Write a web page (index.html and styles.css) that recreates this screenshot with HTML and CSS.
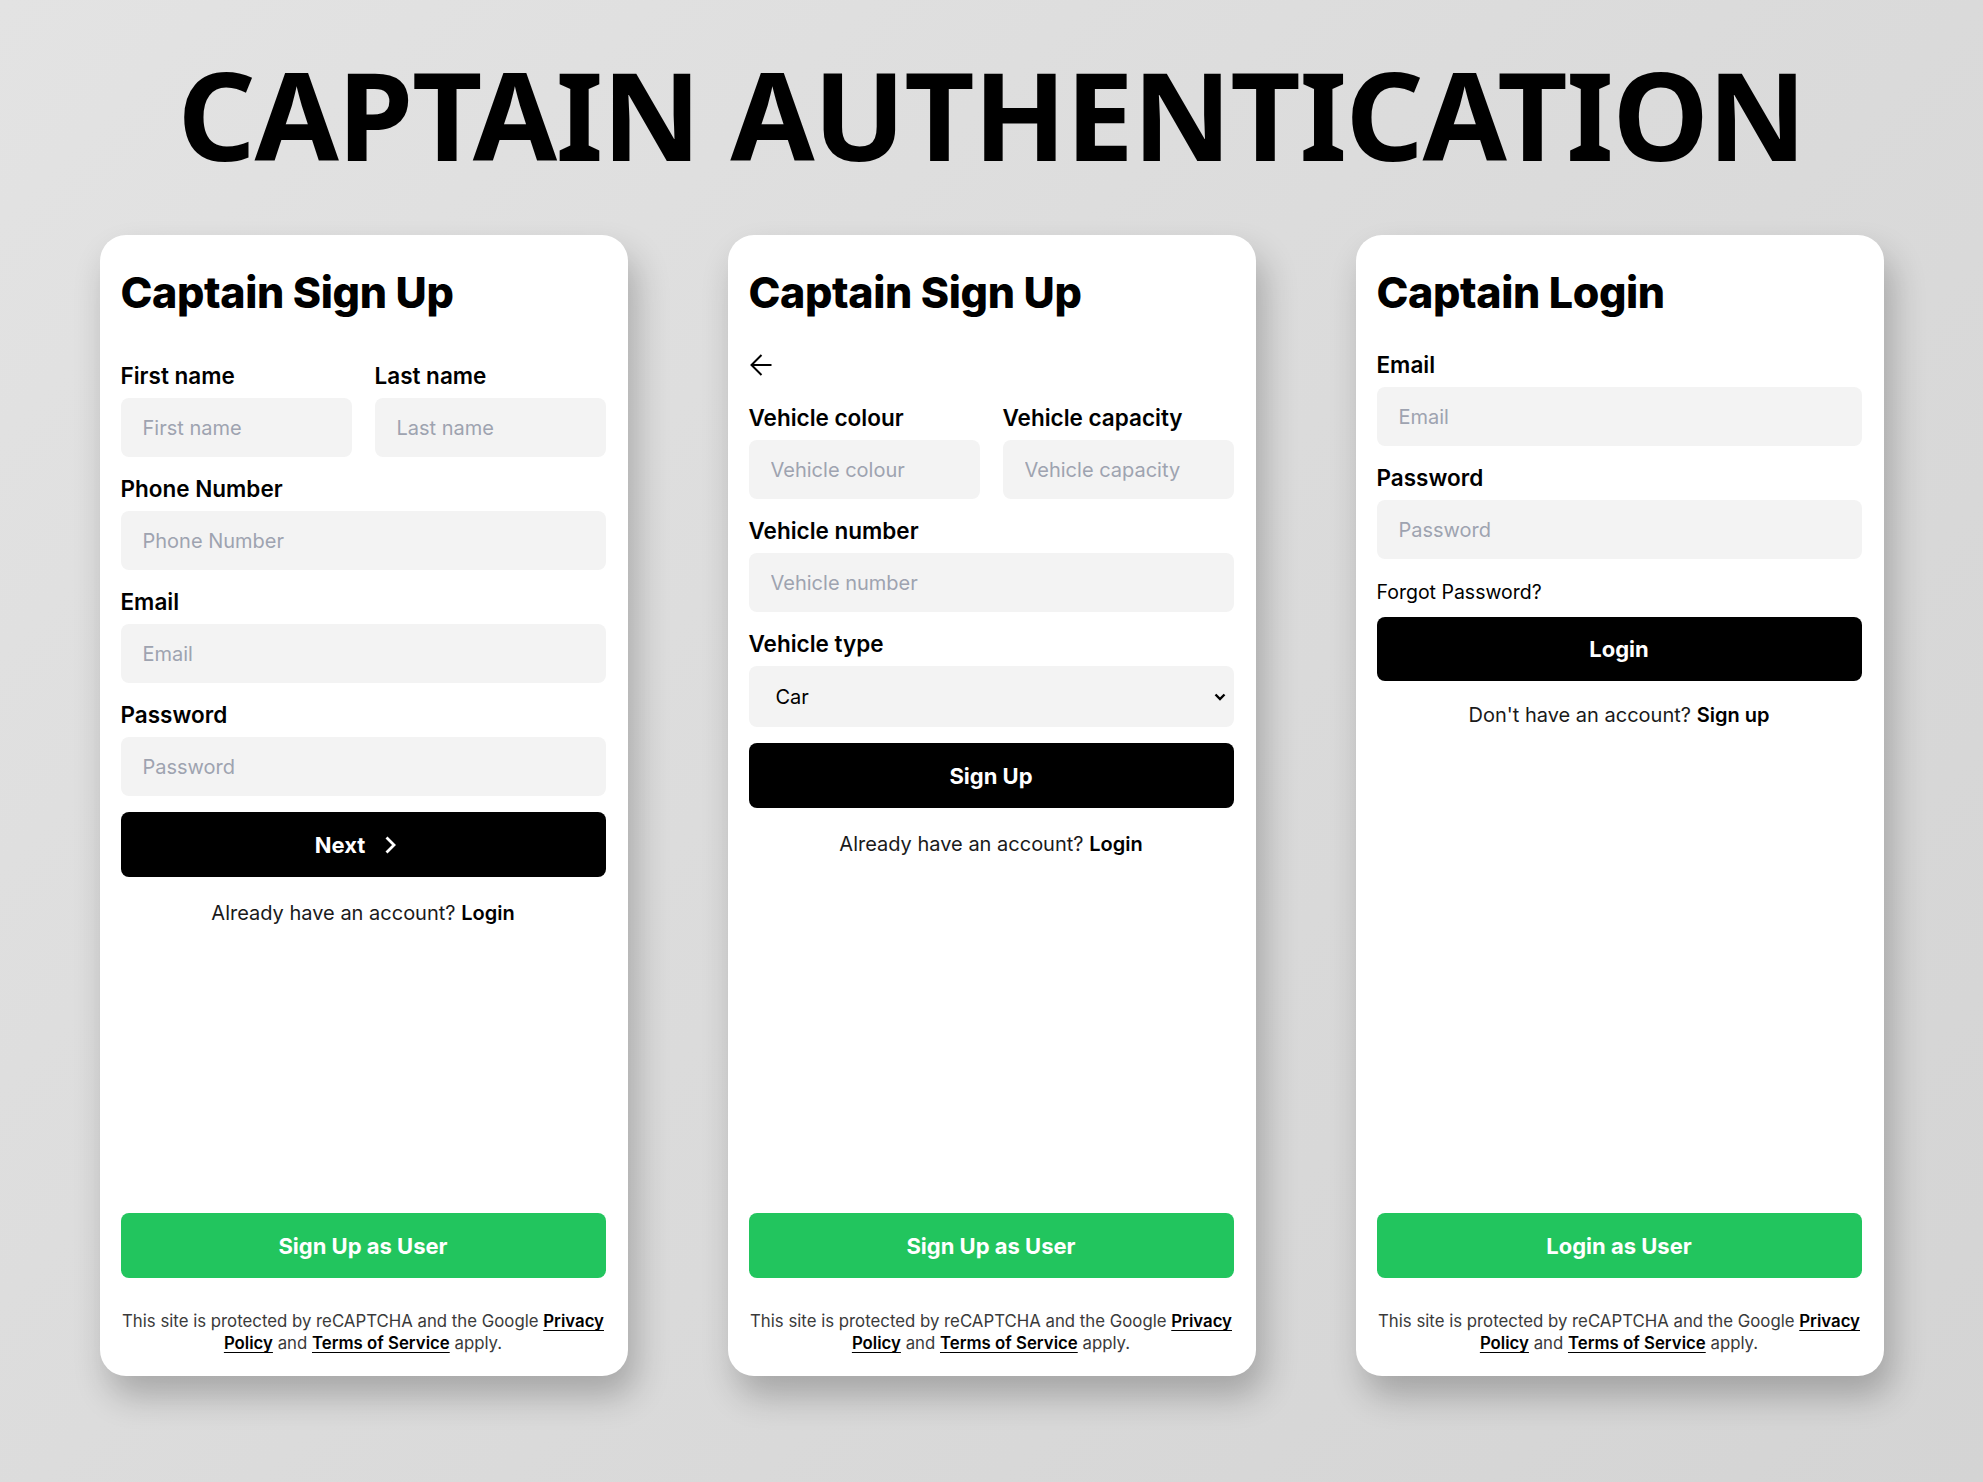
FILE: index.html
```html
<!DOCTYPE html>
<html lang="en">
<head>
<meta charset="utf-8">
<title>Captain Authentication</title>
<link rel="stylesheet" href="styles.css">
</head>
<body>
<main class="page">
  <h1 class="page-title">CAPTAIN AUTHENTICATION</h1>
  <div class="cards">

    <section class="card">
      <div class="card-main">
        <h2 class="card-title card-title--signup">Captain Sign Up</h2>
        <form class="form">
          <div class="fields">
            <div class="row">
              <div class="field">
                <label class="label">First name</label>
                <input class="input" type="text" placeholder="First name">
              </div>
              <div class="field">
                <label class="label">Last name</label>
                <input class="input" type="text" placeholder="Last name">
              </div>
            </div>
            <div class="field">
              <label class="label">Phone Number</label>
              <input class="input" type="text" placeholder="Phone Number">
            </div>
            <div class="field">
              <label class="label">Email</label>
              <input class="input" type="email" placeholder="Email">
            </div>
            <div class="field">
              <label class="label">Password</label>
              <input class="input" type="password" placeholder="Password">
            </div>
          </div>
          <button type="button" class="btn btn-dark btn-next">
            <span>Next</span>
            <svg class="icon-next" width="16" height="20" viewBox="0 0 16 20" fill="none" stroke="currentColor" stroke-width="2.8" stroke-linejoin="miter"><polyline points="3.5,2.5 11,10 3.5,17.5"/></svg>
          </button>
        </form>
        <p class="switch">Already have an account? <a class="switch-link">Login</a></p>
      </div>
      <div class="card-foot">
        <button type="button" class="btn btn-green">Sign Up as User</button>
        <p class="legal">This site is protected by reCAPTCHA and the Google <a class="legal-link">Privacy<br>Policy</a> and <a class="legal-link">Terms of Service</a> apply.</p>
      </div>
    </section>

    <section class="card">
      <div class="card-main">
        <h2 class="card-title">Captain Sign Up</h2>
        <div class="back">
          <svg width="24" height="24" viewBox="0 0 24 24" fill="none" stroke="currentColor" stroke-width="2"><path d="M22.5 12H2.5M12.5 2L2.5 12L12.5 22"/></svg>
        </div>
        <form class="form">
          <div class="fields">
            <div class="row">
              <div class="field">
                <label class="label">Vehicle colour</label>
                <input class="input" type="text" placeholder="Vehicle colour">
              </div>
              <div class="field">
                <label class="label">Vehicle capacity</label>
                <input class="input" type="text" placeholder="Vehicle capacity">
              </div>
            </div>
            <div class="field">
              <label class="label">Vehicle number</label>
              <input class="input" type="text" placeholder="Vehicle number">
            </div>
            <div class="field">
              <label class="label">Vehicle type</label>
              <div class="select-wrap">
                <select class="select">
                  <option>Car</option>
                  <option>Auto</option>
                  <option>Motorcycle</option>
                </select>
                <svg class="select-chevron" width="12" height="8" viewBox="0 0 12 8" fill="none" stroke="currentColor" stroke-width="2.4"><polyline points="1.5,1.5 6,6 10.5,1.5"/></svg>
              </div>
            </div>
          </div>
          <button type="button" class="btn btn-dark">Sign Up</button>
        </form>
        <p class="switch">Already have an account? <a class="switch-link">Login</a></p>
      </div>
      <div class="card-foot">
        <button type="button" class="btn btn-green">Sign Up as User</button>
        <p class="legal">This site is protected by reCAPTCHA and the Google <a class="legal-link">Privacy<br>Policy</a> and <a class="legal-link">Terms of Service</a> apply.</p>
      </div>
    </section>

    <section class="card">
      <div class="card-main">
        <h2 class="card-title card-title--login">Captain Login</h2>
        <form class="form">
          <div class="fields">
            <div class="field">
              <label class="label">Email</label>
              <input class="input" type="email" placeholder="Email">
            </div>
            <div class="field">
              <label class="label">Password</label>
              <input class="input" type="password" placeholder="Password">
            </div>
          </div>
          <p class="forgot">Forgot Password?</p>
          <button type="button" class="btn btn-dark btn-login">Login</button>
        </form>
        <p class="switch switch--login">Don't have an account? <a class="switch-link">Sign up</a></p>
      </div>
      <div class="card-foot">
        <button type="button" class="btn btn-green">Login as User</button>
        <p class="legal">This site is protected by reCAPTCHA and the Google <a class="legal-link">Privacy<br>Policy</a> and <a class="legal-link">Terms of Service</a> apply.</p>
      </div>
    </section>

  </div>
</main>
</body>
</html>
```

FILE: styles.css
```css
* {
  box-sizing: border-box;
}

html, body {
  margin: 0;
  padding: 0;
}

body {
  width: 1983px;
  height: 1482px;
  overflow: hidden;
  background: linear-gradient(135deg, #e3e3e3 0%, #dbdbdb 50%, #d4d4d4 100%);
  font-family: "Inter", "Noto Sans", sans-serif;
  color: #000;
}

.page {
  display: flex;
  flex-direction: column;
  align-items: center;
  padding-top: 48px;
}

.page-title {
  margin: 0;
  font-family: "Noto Sans", "Open Sans", sans-serif;
  font-weight: 700;
  font-size: 122px;
  line-height: 132px;
  letter-spacing: -1.3px;
  color: #000;
}

.cards {
  display: flex;
  justify-content: center;
  gap: 100px;
  margin-top: 55px;
  width: 100%;
}

.card {
  width: 528px;
  height: 1141px;
  background: #fff;
  border-radius: 26px;
  box-shadow: 8px 20px 34px rgba(0, 0, 0, 0.24);
  padding: 31px 22px 22px 21px;
  display: flex;
  flex-direction: column;
  justify-content: space-between;
}

.card-title {
  margin: 0;
  font-size: 43px;
  line-height: 52px;
  font-weight: 800;
  letter-spacing: -0.4px;
}

.card-title--signup {
  margin-bottom: 44px;
}

.card-title--login {
  margin-bottom: 33px;
}

.back {
  margin-top: 35px;
  margin-bottom: 27px;
  width: 24px;
  height: 24px;
  color: #000;
}

.back svg {
  display: block;
}

.form {
  display: flex;
  flex-direction: column;
}

.fields {
  display: flex;
  flex-direction: column;
  gap: 18px;
}

.row {
  display: grid;
  grid-template-columns: 1fr 1fr;
  gap: 23px;
}

.field {
  display: flex;
  flex-direction: column;
}

.label {
  font-size: 22.5px;
  line-height: 28px;
  font-weight: 600;
  margin-bottom: 8px;
  color: #000;
}

.input,
.select {
  height: 59px;
  width: 100%;
  border: none;
  outline: none;
  border-radius: 8px;
  background: #f3f3f3;
  padding: 0 22px;
  font-family: "Inter", sans-serif;
  font-size: 20px;
  color: #000;
}

.input::placeholder {
  color: #9ea3b0;
}

.select-wrap {
  position: relative;
}

.select {
  height: 61px;
  -webkit-appearance: none;
  appearance: none;
  padding-left: 27px;
  display: block;
}

.select-chevron {
  position: absolute;
  right: 8px;
  top: 27px;
  color: #000;
  pointer-events: none;
}

.btn {
  display: flex;
  align-items: center;
  justify-content: center;
  width: 100%;
  border: none;
  border-radius: 8px;
  font-family: "Inter", sans-serif;
  font-size: 22px;
  font-weight: 700;
  color: #fff;
  cursor: pointer;
}

.btn-dark {
  height: 65px;
  margin-top: 16px;
  background: #000;
}

.btn-next span {
  margin-right: 18px;
}

.icon-next {
  display: block;
  margin-right: 12px;
}

.btn-login {
  margin-top: 12px;
  height: 64px;
}

.forgot {
  margin: 20px 0 0;
  font-size: 19.5px;
  line-height: 26px;
  color: #000;
}

.switch {
  margin: 22px 0 0;
  text-align: center;
  font-size: 20px;
  line-height: 28px;
  color: #1a1a1a;
}

.switch--login {
  margin-top: 20px;
}

.switch-link {
  font-weight: 600;
  color: #000;
}

.btn-green {
  height: 65px;
  background: #22c55e;
}

.legal {
  margin: 32px 0 0;
  text-align: center;
  font-size: 16.8px;
  line-height: 22px;
  color: #3a3a3a;
}

.legal-link {
  font-weight: 600;
  color: #000;
  text-decoration: underline;
  text-underline-offset: 3px;
}
```
